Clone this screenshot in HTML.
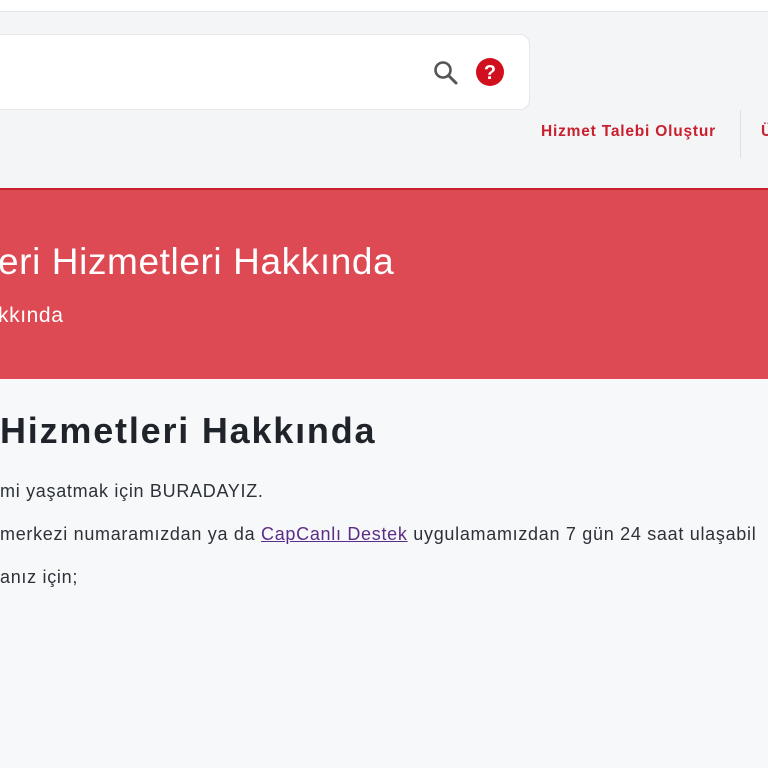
<!DOCTYPE html>
<html><head><meta charset="utf-8"><style>
body{margin:0;width:768px;height:768px;overflow:hidden;background:#f7f8fa;font-family:"Liberation Sans",sans-serif;position:relative}
.top{position:absolute;left:0;top:0;width:768px;height:11px;background:#fff;border-bottom:1px solid #e2e4e8}
.hdr{position:absolute;left:0;top:12px;width:768px;height:176px;background:#f4f5f7}
.search{position:absolute;left:-10px;top:34px;width:538px;height:74px;background:#fff;border:1px solid #e5e7ea;border-radius:10px}
.link{position:absolute;left:541px;top:123px;color:#c8202e;font-weight:bold;font-size:15.5px;letter-spacing:0.8px}
.sep{position:absolute;left:740px;top:110px;width:1px;height:48px;background:#dcdfe3}
.u{position:absolute;left:761px;top:123px;color:#c8202e;font-weight:bold;font-size:15.5px}
.banner{position:absolute;left:0;top:188px;width:768px;height:191px;background:#de4a53;border-top:2px solid #c8202e;box-sizing:border-box}
.t1{position:absolute;left:-2px;top:241px;color:#fff;font-size:37px;letter-spacing:0.6px;white-space:nowrap}
.t2{position:absolute;left:-2px;top:304px;color:#fff;font-size:21px;letter-spacing:0.6px;white-space:nowrap}
h1{position:absolute;left:0;top:410px;margin:0;font-size:36px;letter-spacing:1.8px;color:#1f242a;white-space:nowrap}
.p{position:absolute;left:0;color:#2c3238;font-size:18px;letter-spacing:0.7px;white-space:nowrap}
a{color:#5b2d86}
</style></head><body>
<div class="top"></div><div class="hdr"></div>
<div class="search">
<svg style="position:absolute;left:441px;top:24px" width="28" height="28" viewBox="0 0 28 28"><circle cx="11" cy="11" r="7.5" fill="none" stroke="#555" stroke-width="2.6"/><path d="M16.5 16.5 L24 24" stroke="#555" stroke-width="3" stroke-linecap="round"/></svg>
<svg style="position:absolute;left:485px;top:23px" width="28" height="28" viewBox="0 0 28 28"><circle cx="14" cy="14" r="14" fill="#d0101f"/><text x="14" y="21" text-anchor="middle" fill="#fff" font-size="20" font-weight="bold" font-family="Liberation Sans">?</text></svg>
</div>
<div class="link">Hizmet Talebi Oluştur</div><div class="sep"></div><div class="u">Ü</div>
<div class="banner"></div>
<div class="t1">eri Hizmetleri Hakkında</div>
<div class="t2">kkında</div>
<h1>Hizmetleri Hakkında</h1>
<div class="p" style="top:481px">mi yaşatmak için BURADAYIZ.</div>
<div class="p" style="top:524px">merkezi numaramızdan ya da <a href="#">CapCanlı Destek</a> uygulamamızdan 7 gün 24 saat ulaşabil</div>
<div class="p" style="top:567px">anız için;</div>
</body></html>
